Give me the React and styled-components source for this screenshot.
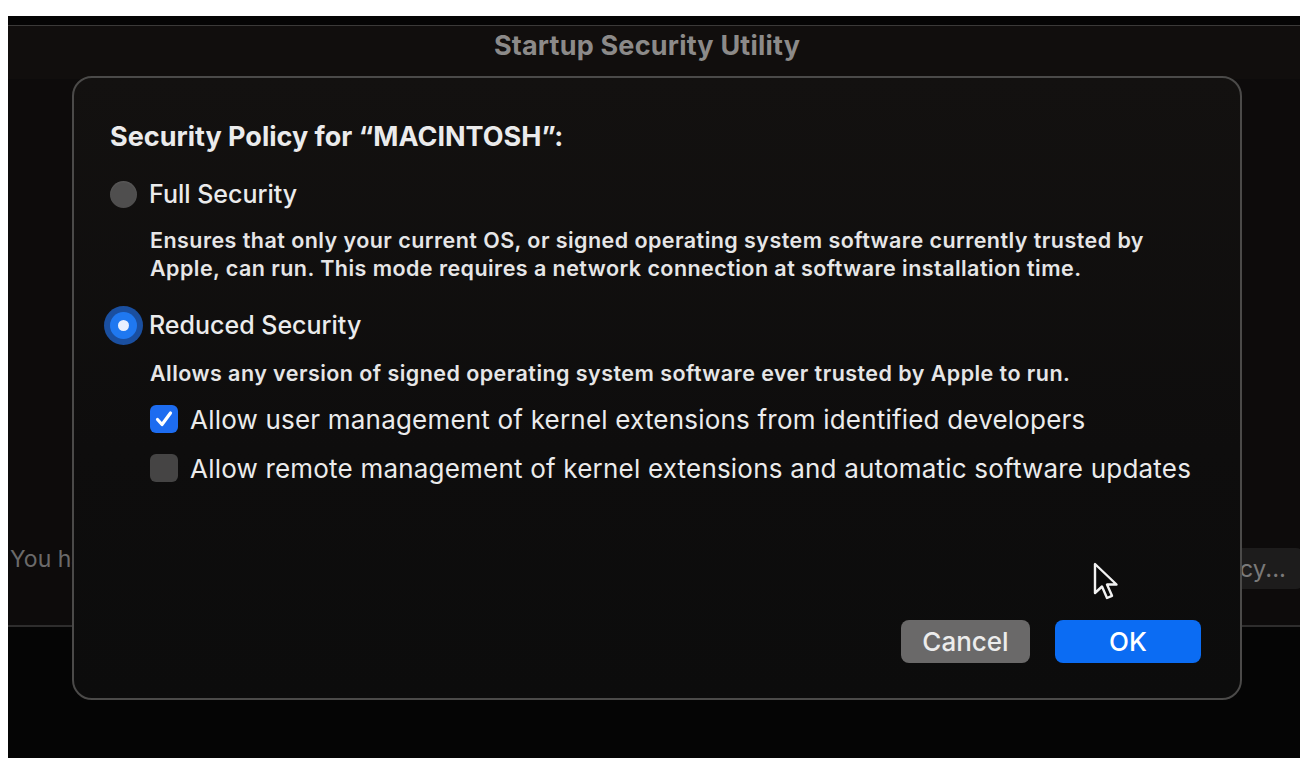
import React from 'react'
import styled, { createGlobalStyle } from 'styled-components'

const GlobalStyle = createGlobalStyle`
  body {
    margin: 8px;
    background: #ffffff;
    font-family: Inter, "Liberation Sans", sans-serif;
  }
`

const Screen = styled.div`
  position: relative;
  margin-top: 8px;
  width: 1292px;
  height: 742px;
  background: #070606;
  display: flex;
  flex-direction: column;
  overflow: hidden;
`

const TopStrip = styled.div`
  height: 9px;
  background: #050404;
`

const TitleBar = styled.div`
  height: 54px;
  border-top: 1px solid #3b3938;
  background: #110e0d;
  display: flex;
  justify-content: center;
  padding-top: 3px;
  box-sizing: border-box;
`

const WindowTitle = styled.div`
  font-size: 27px;
  font-weight: 700;
  color: #8c8a89;
  letter-spacing: 0.2px;
  margin-left: -14px;
`

const WindowBody = styled.div`
  height: 548px;
  background: #0d0b0b;
  display: flex;
  flex-direction: column;
  justify-content: flex-end;
`

const InfoRow = styled.div`
  height: 108px;
  box-sizing: border-box;
  padding: 0 0 26px 2px;
  border-bottom: 2px solid #2e2d2d;
  display: flex;
  align-items: center;
  justify-content: space-between;
`

const InfoText = styled.span`
  font-size: 23px;
  color: #6b6a6a;
`

const GhostButton = styled.div`
  height: 41px;
  padding: 0 18px 0 14px;
  margin: 18px -4px 0 0;
  border-radius: 8px;
  background: #1d1c1c;
  color: #7a7979;
  font-size: 24px;
  display: flex;
  align-items: center;
`

const Lower = styled.div`
  flex: 1;
  background: #050505;
`

const Sheet = styled.div`
  position: absolute;
  left: 64px;
  top: 60px;
  width: 1170px;
  height: 624px;
  box-sizing: border-box;
  border: 2px solid #4b4a49;
  border-radius: 20px;
  background: linear-gradient(180deg, #131110 0%, #0e0d0d 60%, #0c0c0c 100%);
  padding: 44px 39px 35px 36px;
  display: flex;
  flex-direction: column;
  color: #ebebec;
`

const Heading = styled.div`
  font-size: 27px;
  font-weight: 700;
  line-height: 30px;
`

const OptionRow = styled.div`
  display: flex;
  align-items: center;
  height: 34px;
  margin-top: ${({ gap }) => gap}px;
`

const Radio = styled.div`
  width: 27px;
  height: 27px;
  border-radius: 50%;
  box-sizing: border-box;
  margin-right: 12px;
  display: flex;
  align-items: center;
  justify-content: center;
  background: ${({ checked }) => (checked ? '#1f78f0' : '#4f4e4e')};
  box-shadow: ${({ checked }) =>
    checked ? '0 0 0 6px #1a4fa0' : 'inset 0 1px 2px rgba(255,255,255,0.08)'};
  &::after {
    content: '';
    display: ${({ checked }) => (checked ? 'block' : 'none')};
    width: 11px;
    height: 11px;
    border-radius: 50%;
    background: #e8f0ff;
  }
`

const OptionLabel = styled.span`
  font-size: 25px;
  font-weight: 500;
`

const Description = styled.div`
  margin: ${({ gap }) => gap}px 0 0 40px;
  font-size: 21.5px;
  font-weight: 600;
  line-height: 28px;
  letter-spacing: 0.45px;
  color: #e6e6e7;
`

const CheckRow = styled.div`
  display: flex;
  align-items: center;
  height: 34px;
  margin: ${({ gap }) => gap}px 0 0 40px;
`

const Box = styled.div`
  width: 28px;
  height: 28px;
  border-radius: 6px;
  margin-right: 12px;
  display: flex;
  align-items: center;
  justify-content: center;
  background: ${({ checked }) => (checked ? '#1d6cf0' : '#454444')};
`

const CheckLabel = styled.span`
  font-size: 26px;
  font-weight: 400;
  letter-spacing: 0.2px;
`

const Footer = styled.div`
  margin-top: auto;
  display: flex;
  justify-content: flex-end;
  gap: 25px;
`

const Button = styled.div`
  height: 43px;
  width: ${({ w }) => w}px;
  border-radius: 8px;
  display: flex;
  align-items: center;
  justify-content: center;
  font-size: 26px;
  font-weight: 500;
  background: ${({ primary }) => (primary ? '#0b6cf3' : '#6a6969')};
  color: ${({ primary }) => (primary ? '#ffffff' : '#ececec')};
`

const Pointer = styled.svg`
  position: absolute;
  left: 1018px;
  top: 484px;
`

const Check = () => (
  <svg width="20" height="20" viewBox="0 0 20 20">
    <path d="M3.5 10.5 L8 15.5 L16.5 4" fill="none" stroke="#ffffff" strokeWidth="3.2" strokeLinecap="round" strokeLinejoin="round" />
  </svg>
)

export default function App() {
  return (
    <>
      <GlobalStyle />
      <Screen>
        <TopStrip />
        <TitleBar>
          <WindowTitle>Startup Security Utility</WindowTitle>
        </TitleBar>
        <WindowBody>
          <InfoRow>
            <InfoText>You have Reduced Security enabled for this disk.</InfoText>
            <GhostButton>Security Policy...</GhostButton>
          </InfoRow>
        </WindowBody>
        <Lower />

        <Sheet>
          <Heading>Security Policy for “MACINTOSH”:</Heading>

          <OptionRow gap={25}>
            <Radio />
            <OptionLabel>Full Security</OptionLabel>
          </OptionRow>
          <Description gap={15}>
            Ensures that only your current OS, or signed operating system software currently trusted by
            <br />
            Apple, can run. This mode requires a network connection at software installation time.
          </Description>

          <OptionRow gap={26}>
            <Radio checked />
            <OptionLabel>Reduced Security</OptionLabel>
          </OptionRow>
          <Description gap={17}>
            Allows any version of signed operating system software ever trusted by Apple to run.
          </Description>

          <CheckRow gap={15}>
            <Box checked>
              <Check />
            </Box>
            <CheckLabel>Allow user management of kernel extensions from identified developers</CheckLabel>
          </CheckRow>
          <CheckRow gap={15}>
            <Box />
            <CheckLabel>Allow remote management of kernel extensions and automatic software updates</CheckLabel>
          </CheckRow>

          <Footer>
            <Button w={129}>Cancel</Button>
            <Button w={146} primary>OK</Button>
          </Footer>

          <Pointer width="28" height="40" viewBox="0 0 28 40">
            <path
              d="M3 2 L3 31 L10 24.5 L15 36 L20 33.8 L15 22.5 L24.5 22.5 Z"
              fill="#0a0a0a"
              stroke="#f2f2f2"
              strokeWidth="2.4"
              strokeLinejoin="round"
            />
          </Pointer>
        </Sheet>
      </Screen>
    </>
  )
}
